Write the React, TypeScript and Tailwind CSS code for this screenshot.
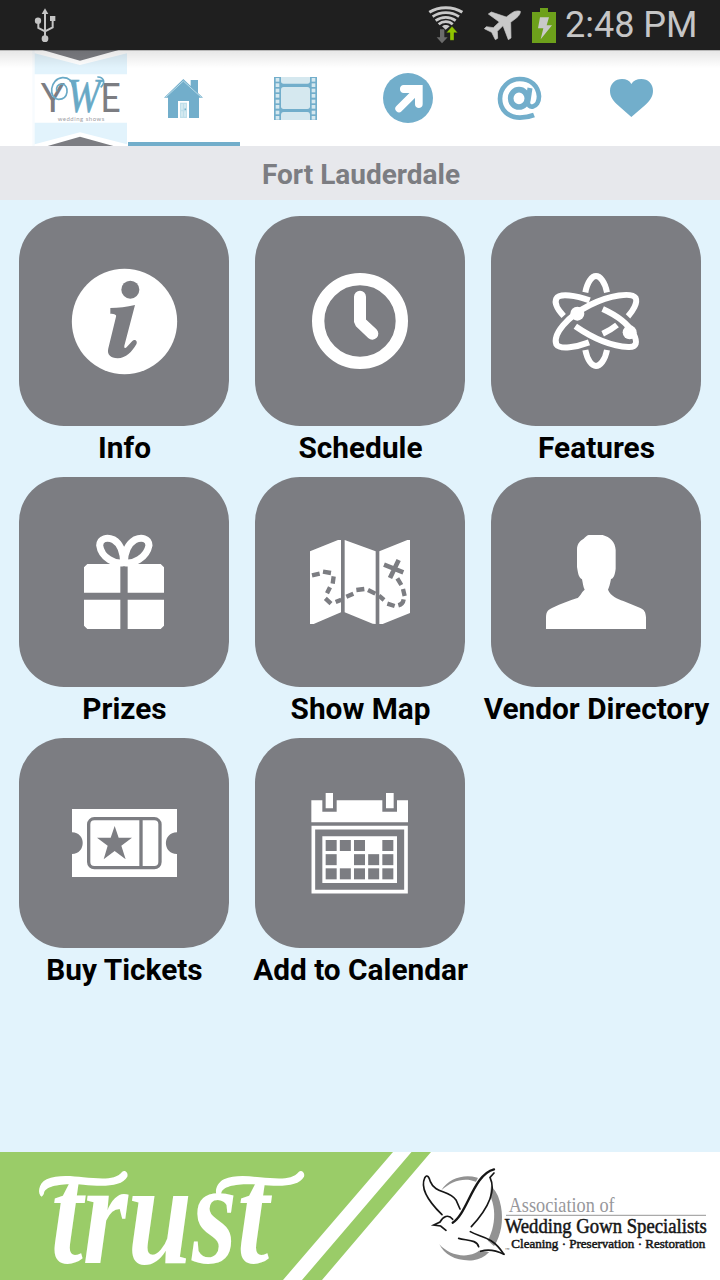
import type { ReactNode } from "react";

const BLUE = "#72aecb";
const GRAY = "#7c7d82";

function StatusBar() {
  return (
    <div className="flex h-[50px] items-center bg-[#1f1f1f] pl-[34px] pr-[22px]">
      <svg className="h-[50px] w-[22px]" viewBox="102 0 66 150" fill="#c4c4c4" stroke="#c4c4c4">
        <path d="M135 42v68M115 64v20l20 10 23-12V58" fill="none" strokeWidth="6" />
        <path d="M135 25l10 17h-20z" stroke="none" />
        <circle cx="114" cy="62" r="9.5" stroke="none" />
        <circle cx="135" cy="116" r="10" stroke="none" />
        <path d="M150 48h16v15h-16z" stroke="none" />
      </svg>

      <svg className="ml-auto h-[50px] w-[38px]" viewBox="21 0 114 150" fill="none" stroke="#c9c9c9">
        <path d="M28 37C56 19 99 19 127 37" strokeWidth="9" />
        <path d="M38 50C61 34 94 34 117 50" strokeWidth="8" />
        <path d="M47 62C65 49 90 49 107 62" strokeWidth="8" />
        <path d="M56 73C68 62 87 62 98 73" strokeWidth="8" />
        <path d="M66 79C72 74 83 74 89 79L77 89z" fill="#c9c9c9" stroke="none" />
        <path d="M60 88h13v24h10l-17 18-16-18h10z" fill="#6b6b6b" stroke="none" />
        <path d="M96 79l17 19h-11v23H90V98H79z" fill="#8fc400" stroke="#1f1f1f" strokeWidth="1" />
      </svg>

      <svg className="ml-[19px] h-[50px] w-[38px]" viewBox="192 0 114 150" fill="#c9c9c9">
        <path d="M301 34C292 31 280 34 270 43L259 51L214 36L205 42L238 66L220 83L199 80L193 86L215 97L226 119L233 115L232 94L249 77L265 119L273 114L272 67L289 54C297 48 302 40 301 34Z" stroke="#c9c9c9" strokeWidth="2" strokeLinejoin="round" />
      </svg>

      <svg className="ml-[10px] h-[50px] w-[24px]" viewBox="336 0 72 150">
        <path d="M360 24h24v12h24v93h-72V36h24z" fill="#6da01b" />
        <path d="M360 52h27l-7 24h16l-34 42 8-33h-16z" fill="#c9c9c9" />
      </svg>

      <span className="ml-[9px] w-[133px] whitespace-nowrap text-[36px] leading-[50px] text-[#c6c6c6]">
        2:48 PM
      </span>
    </div>
  );
}

function Logo() {
  return (
    <svg className="h-24 w-32" viewBox="0 150 384 288">
      <path d="M97 150h7v288h-7z" fill="#f7fbfe" />
      <path d="M104 160L240 195L381 160V223H104z" fill="#e2f3fc" />
      <path d="M128 150h228l-116 32z" fill={GRAY} />
      <path d="M104 368h277v65L240 397L104 433z" fill="#e2f3fc" />
      <path d="M143 438L240 410L340 438z" fill={GRAY} />
      <text x="122" y="337" fontFamily="Lato" fontSize="122" fill={GRAY} textLength="72" lengthAdjust="spacingAndGlyphs">Y</text>
      <text x="301" y="337" fontFamily="Lato" fontSize="122" fill={GRAY} textLength="62" lengthAdjust="spacingAndGlyphs">E</text>
      <text x="201" y="337" fontFamily="Liberation Serif" fontStyle="italic" fontSize="148" fill="#68a9c6" stroke="#68a9c6" strokeWidth="2" textLength="100" lengthAdjust="spacingAndGlyphs">W</text>
      <path d="M219 262C218 242 205 232 187 233C150 236 143 295 176 298C207 297 208 256 187 252C173 251 168 262 170 274" fill="none" stroke="#68a9c6" strokeWidth="5" />
      <path d="M302 262C318 248 311 230 292 231" fill="none" stroke="#68a9c6" strokeWidth="5" />
      <text x="173" y="362" fontFamily="Lato" fontSize="18" fill="#a0a0a5" textLength="140">wedding shows</text>
    </svg>
  );
}

type Tab = { id: string; viewBox: string; icon: ReactNode };

const tabs: Tab[] = [
  {
    id: "home",
    viewBox: "384 150 336 288",
    icon: (
      <>
        <path d="M492 293L550 237L572 258V240H594V279L609 293H597V354H504V293z" fill={BLUE} />
        <path d="M497 292L550 243L604 292" fill="none" stroke="#b9dce9" strokeWidth="3" />
        <path d="M534 303h33v51h-33z" fill="#fff" />
        <path d="M540 308h21v46h-21z" fill="#bfdfea" />
        <path d="M543 312h6v17h-6zM552 312h6v12h-6zM543 334h6v16h-6zM552 334h6v16h-6z" fill="#d3e9f0" />
        <circle cx="556" cy="328" r="2.5" fill={BLUE} />
      </>
    ),
  },
  {
    id: "videos",
    viewBox: "0 0 336 288",
    icon: (
      <>
        <path d="M102 81h129v129H102z" fill={BLUE} />
        <g fill="#d5e8ef">
          <path d="M123 81h87v12q0 8-8 8h-71q-8 0-8-8z" />
          <rect x="123" y="111" width="87" height="66" rx="8" />
          <path d="M123 210v-15q0-9 8-9h71q8 0 8 9v15z" />
          {[84, 100, 116, 132, 149, 165, 182, 198].map((y) => (
            <g key={y}>
              <rect x="107" y={y} width="11" height="11" />
              <rect x="215" y={y} width="11" height="11" />
            </g>
          ))}
        </g>
      </>
    ),
  },
  {
    id: "share",
    viewBox: "336 0 336 288",
    icon: (
      <>
        <circle cx="504" cy="144" r="75" fill={BLUE} />
        <path d="M477 176L526 127" fill="none" stroke="#fff" strokeWidth="22" strokeLinecap="round" />
        <path d="M491 105H548V163C548 178 525 178 525 163V129H491C476 129 476 105 491 105z" fill="#fff" />
      </>
    ),
  },
  {
    id: "contact",
    viewBox: "132 150 336 288",
    icon: (
      <g fill="none" stroke={BLUE}>
        <ellipse cx="297" cy="295" rx="25" ry="26" strokeWidth="17" />
        <path d="M330 264L324 303" strokeWidth="15" />
        <path d="M324 303C320 329 357 325 357 289C355 258 332 237 299 237C266 237 240 264 240 296C240 330 266 353 300 353C317 353 330 350 342 345" strokeWidth="14" />
      </g>
    ),
  },
  {
    id: "favorites",
    viewBox: "468 150 336 288",
    icon: (
      <path d="M634 351L594 316C578 301 570 289 570 272C570 251 586 237 606 237C619 237 629 242 634 252C640 242 650 237 664 237C684 237 699 251 699 272C699 289 691 301 675 316z" fill={BLUE} />
    ),
  },
];

function Header() {
  return (
    <header className="relative flex h-24 bg-white">
      <Logo />
      {tabs.map((tab, i) => (
        <button key={tab.id} className={`h-24 w-28 ${i === 0 ? "border-b-4 border-[#72aecb]" : ""}`}>
          <svg className="h-24 w-28" viewBox={tab.viewBox}>
            {tab.icon}
          </svg>
        </button>
      ))}
      <div className="absolute inset-x-0 top-0 h-[18px] bg-gradient-to-b from-black/10 to-transparent" />
      <div className="absolute inset-x-0 top-0 h-px bg-black/20" />
    </header>
  );
}

type Tile = { label: string; viewBox: string; icon: ReactNode };

const tiles: Tile[] = [
  {
    label: "Info",
    viewBox: "57 48 630 630",
    icon: (
      <>
        <circle cx="373.5" cy="364.5" r="158" />
        <circle cx="391" cy="269" r="27" fill={GRAY} />
        <path d="M331 324C356 324 380 321 405 315L373 437C372 445 376 446 381 440L397 423C404 416 414 423 409 433C396 455 378 475 353 475C332 475 320 464 325 445L348 350C350 344 345 342 331 341z" fill={GRAY} />
      </>
    ),
  },
  {
    label: "Schedule",
    viewBox: "45 48 630 630",
    icon: (
      <g fill="none" stroke="#fff" strokeWidth="37">
        <circle cx="360" cy="363" r="125.5" />
        <path d="M360 290V366L397 401" strokeWidth="36" strokeLinecap="round" strokeLinejoin="bevel" />
      </g>
    ),
  },
  {
    label: "Features",
    viewBox: "33 48 630 630",
    icon: (
      <>
        <g fill="none" stroke="#fff" strokeWidth="18">
          <path d="M316 277C322 245 336 228 348 228C360 228 375 245 381 277" />
          <path d="M316 450C322 481 336 498 348 498C360 498 375 481 381 450" />
          <path d="M251 348C236 332 222 310 229 296C238 278 290 287 329 301" />
          <path d="M327 427C290 441 240 450 229 433C218 404 260 350 330 315C390 285 455 276 467 294C474 308 458 334 444 349" />
          <path d="M368 327C410 346 444 372 460 400C474 428 470 442 445 441C394 439 334 412 286 379" />
          <path d="M368 401C385 393 400 384 411 375" />
        </g>
        <circle cx="292" cy="341" r="21" />
        <circle cx="449" cy="397" r="21" />
      </>
    ),
  },
  {
    label: "Prizes",
    viewBox: "57 21 630 630",
    icon: (
      <>
        <path d="M262 282H482L492 292V368H252V292zM252 389H492V467L482 477H262L252 467z" />
        <path d="M361 288q11-8 22 0v189h-22z" fill={GRAY} />
        <path d="M371 278C346 284 304 264 299 226C300 204 322 201 341 209C358 219 370 240 371 278zM373 278C398 284 440 264 447 226C446 204 424 201 405 209C388 219 374 240 373 278z" fill="none" stroke="#fff" strokeWidth="21" />
      </>
    ),
  },
  {
    label: "Show Map",
    viewBox: "45 21 630 630",
    icon: (
      <>
        <path d="M210 244L294 210H303V427L221 462H210zM314 210L407 244V462L398 461L314 427zM418 244L502 210H510V429L428 462H418z" />
        <g fill="none" stroke={GRAY} strokeWidth="13">
          <path d="M216 316L239 311M249 305L273 309M281 319L278 341M270 352L261 370M256 385L273 401M287 396L304 389M319 380L340 371M349 360L373 357M384 360L406 371M417 377L432 390M442 401L464 408M475 406Q489 402 491 388M494 378L489 357M484 345L472 325" />
          <path d="M432 284L490 307M476 270L450 324" strokeWidth="14" />
        </g>
      </>
    ),
  },
  {
    label: "Vendor Directory",
    viewBox: "33 21 630 630",
    icon: (
      <path d="M326 195H368C390 201 406 216 407 240V296C405 316 400 325 393 327C390 342 388 351 384 359C392 378 412 387 430 393L481 414C493 419 497 427 498 442V477H198V442C198 426 204 419 216 414C245 401 270 391 290 385C300 382 302 369 314 359C309 350 309 340 306 328C296 323 294 310 291 291V238C291 220 302 211 311 206C316 201 320 197 326 195z" />
    ),
  },
  {
    label: "Buy Tickets",
    viewBox: "57 24 630 630",
    icon: (
      <>
        <path d="M216 237h315v70c-44 0-44 65 0 65v69H216v-69c43 0 43-65 0-65z" />
        <rect x="266" y="266" width="214" height="147" rx="17" fill="none" stroke={GRAY} strokeWidth="10" />
        <path d="M423 266v147" stroke={GRAY} strokeWidth="10" />
        <path d="M344 288L356 323H396L364 347L377 388L344 363L311 388L323 347L291 323H332z" fill={GRAY} />
      </>
    ),
  },
  {
    label: "Add to Calendar",
    viewBox: "765 24 630 630",
    icon: (
      <>
        <path d="M934 211h33v34h43v-34h137v34h44v-34h33v66H934zM977 189h22v46h-22zM1158 189h23v46h-23z" />
        <path d="M940 293h278v192H940z" fill="none" stroke="#fff" strokeWidth="11" />
        <path d="M967 319h224v140H967z" />
        <g fill={GRAY}>
          {["11101", "10111", "11111"].map((row, r) =>
            row.split("").map((day, c) =>
              day === "1" ? (
                <rect key={`${r}-${c}`} x={977 + c * 42.5} y={330 + r * 42.5} width="33" height="33" />
              ) : null,
            ),
          )}
        </g>
      </>
    ),
  },
];

function Banner() {
  return (
    <svg className="block h-32 w-full" viewBox="0 0 720 128">
      <path d="M0 0h720v128H0z" fill="#fff" />
      <path d="M0 0H393L283 128H0zM411.500 0H431L322 128H302z" fill="#9acc68" />

      <g transform="translate(0 -12) scale(.33333)">
        <text x="152" y="368" fontFamily="Liberation Serif" fontWeight="700" fontStyle="italic" fontSize="440" fill="#fff" textLength="655" lengthAdjust="spacingAndGlyphs">
          trust
        </text>
        <g fill="#fff">
          <path d="M125 170C112 164 114 130 140 118C170 104 215 108 250 112C300 116 345 122 366 96C374 88 386 98 382 110C366 140 310 140 250 134C190 130 135 136 132 160Q130 168 125 170z" />
          <path d="M655 170C642 164 646 130 672 118C702 104 745 108 780 112C830 116 875 122 896 96C904 88 916 98 912 110C896 140 840 140 780 134C720 130 667 136 664 160Q662 168 655 170z" />
        </g>
      </g>

      {/* dove in front of the ring */}
      <g transform="translate(400 -12) scale(.33333)">
        <path d="M124 151C160 92 260 92 294 168C326 250 292 350 220 361C170 365 134 345 118 313C150 350 216 362 252 319C287 275 297 195 256 145C216 105 163 115 124 151z" fill="#929292" />
        <path d="M82 108C94 148 130 160 166 168L184 210L235 112L282 88L274 130L270 165L212 262L250 290L312 344L236 331L170 292L112 258L126 224C78 188 62 140 82 108z" fill="#fff" />
        <g fill="none" stroke="#161616" strokeWidth="5" strokeLinecap="round">
          <path d="M126 224C86 185 60 145 74 114C82 100 88 113 91 125C105 160 147 151 168 180L180 207" />
          <path d="M158 248C202 222 220 103 282 88" strokeWidth="7" />
          <path d="M282 99L270 112C290 155 260 210 214 260" />
          <path d="M158 238C145 221 129 230 120 246L101 255L122 258L138 271" />
          <path d="M211 275C238 292 275 286 311 342" />
          <path d="M176 295C203 302 230 299 236 320M242 334C262 327 284 329 312 343" />
        </g>
        <path d="M318 226H918" stroke="#aaa" strokeWidth="4" />
        <g fontFamily="Liberation Serif">
          <text x="326" y="215" fontSize="62" fill="#97979b" textLength="318" lengthAdjust="spacingAndGlyphs">Association of</text>
          <text x="314" y="278" fontSize="63" fill="#161616" stroke="#161616" strokeWidth="1.500" textLength="606" lengthAdjust="spacingAndGlyphs">Wedding Gown Specialists</text>
          <text x="334" y="324" fontSize="39" fill="#161616" stroke="#161616" strokeWidth="1.500" textLength="582" lengthAdjust="spacingAndGlyphs">Cleaning · Preservation · Restoration</text>
          <text x="314" y="333" fontSize="14" fill="#161616">™</text>
        </g>
      </g>
    </svg>
  );
}

export default function App() {
  return (
    <div className="flex h-[1280px] w-[720px] flex-col overflow-hidden bg-[#e2f3fc] font-['Roboto',sans-serif]">
      <StatusBar />
      <Header />
      <h1 className="h-[54px] bg-[#e7e8ec] pl-0.5 text-center text-[28px] font-bold leading-[57px] text-[#7c7d82]">
        Fort Lauderdale
      </h1>
      <main className="grid flex-1 grid-cols-3 content-start px-1.5 pt-4">
        {tiles.map((tile) => (
          <div key={tile.label} className="flex h-[261px] flex-col items-center">
            <div className="h-[210px] w-[210px] overflow-hidden rounded-[45px] bg-[#7c7d82]">
              <svg className="h-full w-full" viewBox={tile.viewBox} fill="#fff">
                {tile.icon}
              </svg>
            </div>
            <span className="whitespace-nowrap pl-px text-[29.8px] font-bold leading-[44px] text-black">{tile.label}</span>
          </div>
        ))}
      </main>
      <Banner />
    </div>
  );
}
